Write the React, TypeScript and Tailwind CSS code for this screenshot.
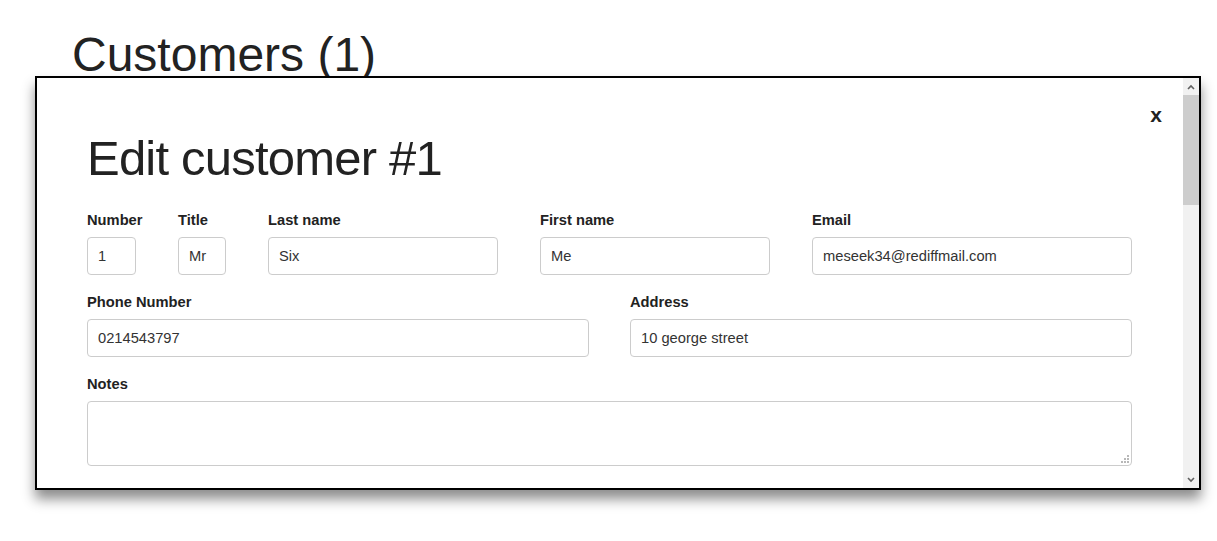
import React from 'react';

const font = { fontFamily: '"Liberation Sans", Arial, sans-serif' };

const Field = ({ label, value, width }: { label: string; value: string; width: string }) => (
    <div className={`flex flex-col ${width}`}>
        <label className="h-5 leading-5 text-[14.7px] font-bold text-[#222] mb-[7px] whitespace-nowrap">{label}</label>
        <input
            readOnly
            value={value}
            className="h-[38px] w-full border border-[#ccc] rounded-[4px] px-[10px] text-[14.7px] text-[#333] bg-white outline-none"
        />
    </div>
);

const ResizeGrip = () => (
    <div className="absolute right-[3px] bottom-[3px] grid grid-cols-3 gap-[1px]">
        {[0, 0, 1, 0, 1, 1, 1, 1, 1].map((on, i) => (
            <span key={i} className={`w-[2px] h-[2px] ${on ? 'bg-[#b8b8b8]' : 'bg-transparent'}`} />
        ))}
    </div>
);

const Scrollbar = () => (
    <div className="w-[16px] shrink-0 bg-[#f1f1f1] flex flex-col">
        <div className="h-[17px] flex items-center justify-center">
            <svg width="8" height="6" viewBox="0 0 8 6">
                <path d="M1 5 L4 2 L7 5" fill="none" stroke="#606060" strokeWidth="1.6" />
            </svg>
        </div>
        <div className="h-[110px] bg-[#cdcdcd]" />
        <div className="flex-1" />
        <div className="h-[17px] flex items-center justify-center">
            <svg width="8" height="6" viewBox="0 0 8 6">
                <path d="M1 1 L4 4 L7 1" fill="none" stroke="#606060" strokeWidth="1.6" />
            </svg>
        </div>
    </div>
);

export default function App() {
    return (
        <div className="relative w-[1217px] h-[541px] bg-white overflow-hidden" style={font}>
            {/* Page heading */}
            <h1 className="pl-[72px] pt-[31px] text-[48px] leading-none text-[#222]">Customers (1)</h1>

            {/* Modal */}
            <div className="absolute left-[35px] top-[76px] w-[1166px] h-[414px] bg-white border-2 border-black shadow-[0_9px_12px_rgba(0,0,0,0.45)] flex">
                <div className="relative flex-1 overflow-hidden pl-[50px] pr-[51px] pt-[56px]">
                    <button className="absolute right-[21px] top-[26px] text-[21px] font-bold text-[#222] leading-none">x</button>

                    <h2 className="text-[49px] leading-none tracking-[-0.8px] text-[#222] mb-[27px]">Edit customer #1</h2>

                    <div className="flex gap-[42px] mb-[17px]">
                        <Field label="Number" value="1" width="w-[49px]" />
                        <Field label="Title" value="Mr" width="w-[48px]" />
                        <Field label="Last name" value="Six" width="w-[230px]" />
                        <Field label="First name" value="Me" width="w-[230px]" />
                        <Field label="Email" value="meseek34@rediffmail.com" width="w-[320px]" />
                    </div>

                    <div className="flex gap-[41px] mb-[17px]">
                        <Field label="Phone Number" value="0214543797" width="flex-1" />
                        <Field label="Address" value="10 george street" width="flex-1" />
                    </div>

                    <div className="flex flex-col">
                        <label className="h-5 leading-5 text-[14.7px] font-bold text-[#222] mb-[7px]">Notes</label>
                        <div className="relative">
                            <textarea
                                readOnly
                                className="block h-[65px] w-full border border-[#ccc] rounded-[4px] px-[10px] py-2 text-sm text-[#333] resize-none outline-none"
                            />
                            <ResizeGrip />
                        </div>
                    </div>
                </div>
                <Scrollbar />
            </div>
        </div>
    );
}
